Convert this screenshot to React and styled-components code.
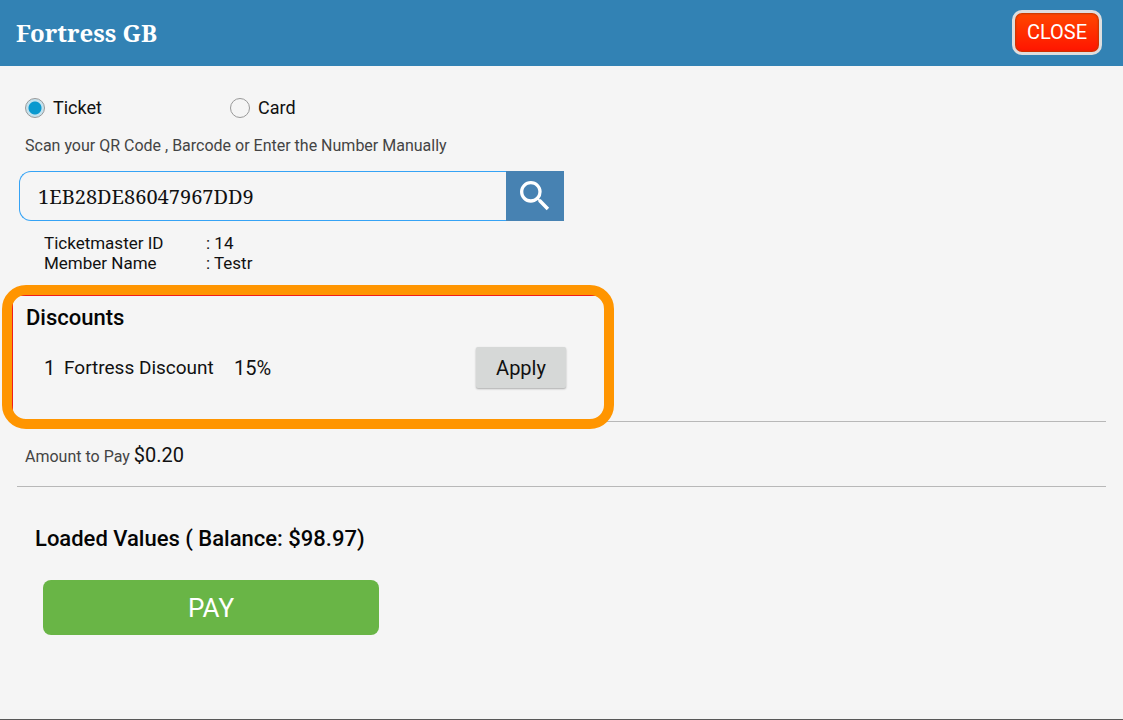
import React, { useState } from "react";
import styled, { createGlobalStyle } from "styled-components";

const GlobalStyle = createGlobalStyle`
  * {
    box-sizing: border-box;
  }

  body {
    margin: 0;
    background-color: #f5f5f5;
    color: #111;
    font-family: Roboto, sans-serif;
  }
`;

const Root = styled.div`
  min-height: 100vh;
  border-bottom: 1px solid #585858;
`;

const Header = styled.header`
  height: 66px;
  padding: 0 21px 2px 16px;
  display: flex;
  align-items: center;
  justify-content: space-between;
  background-color: #3282b4;
`;

const Title = styled.h1`
  margin: 0;
  color: white;
  font-family: "Noto Serif", "DejaVu Serif Condensed", "Liberation Serif", serif;
  font-size: 24px;
  font-weight: 700;
`;

const CloseButton = styled.button`
  width: 90px;
  height: 45px;
  padding: 0;
  border: 3px solid #dedede;
  border-radius: 10px;
  background: linear-gradient(#ff4800, #ff1400);
  box-shadow: inset 0 0 2px 1px #c03a00;
  color: white;
  font-family: inherit;
  font-size: 20px;
  cursor: pointer;
`;

const Main = styled.main`
  padding: 30px 17px 40px 12px;
`;

const RadioGroup = styled.div`
  display: flex;
  padding-left: 13px;
`;

const RadioLabel = styled.label`
  width: 205px;
  display: flex;
  align-items: center;
  gap: 8px;
  font-size: 18px;
  line-height: 24px;
`;

const Radio = styled.input`
  appearance: none;
  width: 20px;
  height: 20px;
  margin: 0;
  border: 1px solid #999;
  border-radius: 50%;

  &:checked {
    background: radial-gradient(circle, #0a99cf 6px, #c4e2ee 7px);
  }
`;

const Hint = styled.label`
  display: block;
  margin: 16px 0 15px 13px;
  color: #444;
  font-size: 16px;
  line-height: 20px;
`;

const SearchBar = styled.form`
  display: flex;
  max-width: 545px;
  height: 50px;
  margin-left: 7px;
`;

const SearchInput = styled.input`
  flex: 1;
  min-width: 0;
  padding: 0 18px;
  border: 1px solid #35a3f5;
  border-right: 0;
  border-radius: 12px 0 0 12px;
  outline: none;
  background: transparent;
  color: #111;
  font-family: "Noto Serif", "DejaVu Serif Condensed", "Liberation Serif", serif;
  font-size: 20px;
`;

const SearchButton = styled.button`
  width: 58px;
  padding: 0;
  border: 0;
  background-color: #4782b2;
  color: white;
  cursor: pointer;
`;

const SearchIcon = styled.svg`
  display: block;
  margin: 0 auto;
`;

const Details = styled.dl`
  display: grid;
  grid-template-columns: 162px 1fr;
  margin: 12px 0 22px 32px;
  font-size: 17px;
  line-height: 20px;
`;

const Value = styled.dd`
  margin: 0;
`;

const Discounts = styled.section`
  position: relative;
  max-width: 592px;
  height: 126px;
  padding: 10px 38px 0 13px;
  border-top: 1px solid #f01c1c;
  border-left: 1px solid #f01c1c;
`;

const Highlight = styled.div`
  position: absolute;
  top: -11px;
  right: -10px;
  bottom: -8px;
  left: -11px;
  border: 10px solid #ff9500;
  border-radius: 24px;
  pointer-events: none;
`;

const Heading = styled.h2`
  margin: 0;
  color: #050505;
  font-size: 22px;
  font-weight: 500;
  line-height: 24px;
`;

const DiscountRow = styled.div`
  display: flex;
  align-items: center;
  margin-top: 17px;
  padding-left: 18px;
  font-size: 20px;
`;

const DiscountIndex = styled.span`
  width: 20px;
`;

const DiscountName = styled.span`
  width: 170px;
  font-size: 19px;
`;

const ApplyButton = styled.button`
  width: 90px;
  height: 41px;
  margin-left: auto;
  padding: 0;
  border: 0;
  border-radius: 2px;
  background-color: #d6d8d7;
  box-shadow: 0 1px 2px rgba(0, 0, 0, 0.3);
  color: #111;
  font-family: inherit;
  font-size: 20px;
  cursor: pointer;
`;

const Divider = styled.hr`
  height: 1px;
  margin: 0 0 0 5px;
  border: 0;
  background-color: #b8b8b8;
`;

const Amount = styled.p`
  height: 24px;
  margin: 21px 0 19px 13px;
  color: #444;
  font-size: 16px;
  line-height: 24px;
`;

const Price = styled.span`
  color: #111;
  font-size: 20px;
`;

const Payment = styled.section`
  padding: 40px 0 0 23px;
`;

const PayButton = styled.button`
  display: block;
  width: 100%;
  max-width: 336px;
  height: 55px;
  margin: 29px 0 0 8px;
  padding: 0;
  border: 0;
  border-radius: 8px;
  background-color: #69b546;
  color: white;
  font-family: inherit;
  font-size: 26px;
  cursor: pointer;
`;

const App = () => {
  const [type, setType] = useState("ticket");
  const [number, setNumber] = useState("1EB28DE86047967DD9");

  const search = (e) => {
    e.preventDefault();
  };

  return (
    <Root>
      <GlobalStyle />
      <Header>
        <Title>Fortress GB</Title>
        <CloseButton type="button">CLOSE</CloseButton>
      </Header>
      <Main>
        <RadioGroup>
          <RadioLabel>
            <Radio type="radio" name="type" checked={type === "ticket"} onChange={() => setType("ticket")} />
            Ticket
          </RadioLabel>
          <RadioLabel>
            <Radio type="radio" name="type" checked={type === "card"} onChange={() => setType("card")} />
            Card
          </RadioLabel>
        </RadioGroup>
        <Hint htmlFor="number">Scan your QR Code , Barcode or Enter the Number Manually</Hint>
        <SearchBar onSubmit={search}>
          <SearchInput id="number" value={number} onChange={(e) => setNumber(e.target.value)} />
          <SearchButton type="submit" aria-label="Search">
            <SearchIcon width="40" height="40" viewBox="0 0 24 24" fill="currentColor">
              <path d="M15.5 14h-.79l-.28-.27A6.47 6.47 0 0 0 16 9.5 6.5 6.5 0 1 0 9.5 16c1.61 0 3.09-.59 4.23-1.57l.27.28v.79l5 4.99L20.49 19l-4.99-5zm-6 0C7.01 14 5 11.99 5 9.5S7.01 5 9.5 5 14 7.01 14 9.5 11.99 14 9.5 14z" />
            </SearchIcon>
          </SearchButton>
        </SearchBar>
        <Details>
          <dt>Ticketmaster ID</dt>
          <Value>: 14</Value>
          <dt>Member Name</dt>
          <Value>: Testr</Value>
        </Details>
        <Discounts>
          <Heading>Discounts</Heading>
          <DiscountRow>
            <DiscountIndex>1</DiscountIndex>
            <DiscountName>Fortress Discount</DiscountName>
            <span>15%</span>
            <ApplyButton type="button">Apply</ApplyButton>
          </DiscountRow>
          <Highlight />
        </Discounts>
        <Divider />
        <Amount>
          Amount to Pay <Price>$0.20</Price>
        </Amount>
        <Divider />
        <Payment>
          <Heading>Loaded Values ( Balance: $98.97)</Heading>
          <PayButton type="button">PAY</PayButton>
        </Payment>
      </Main>
    </Root>
  );
};

export default App;
